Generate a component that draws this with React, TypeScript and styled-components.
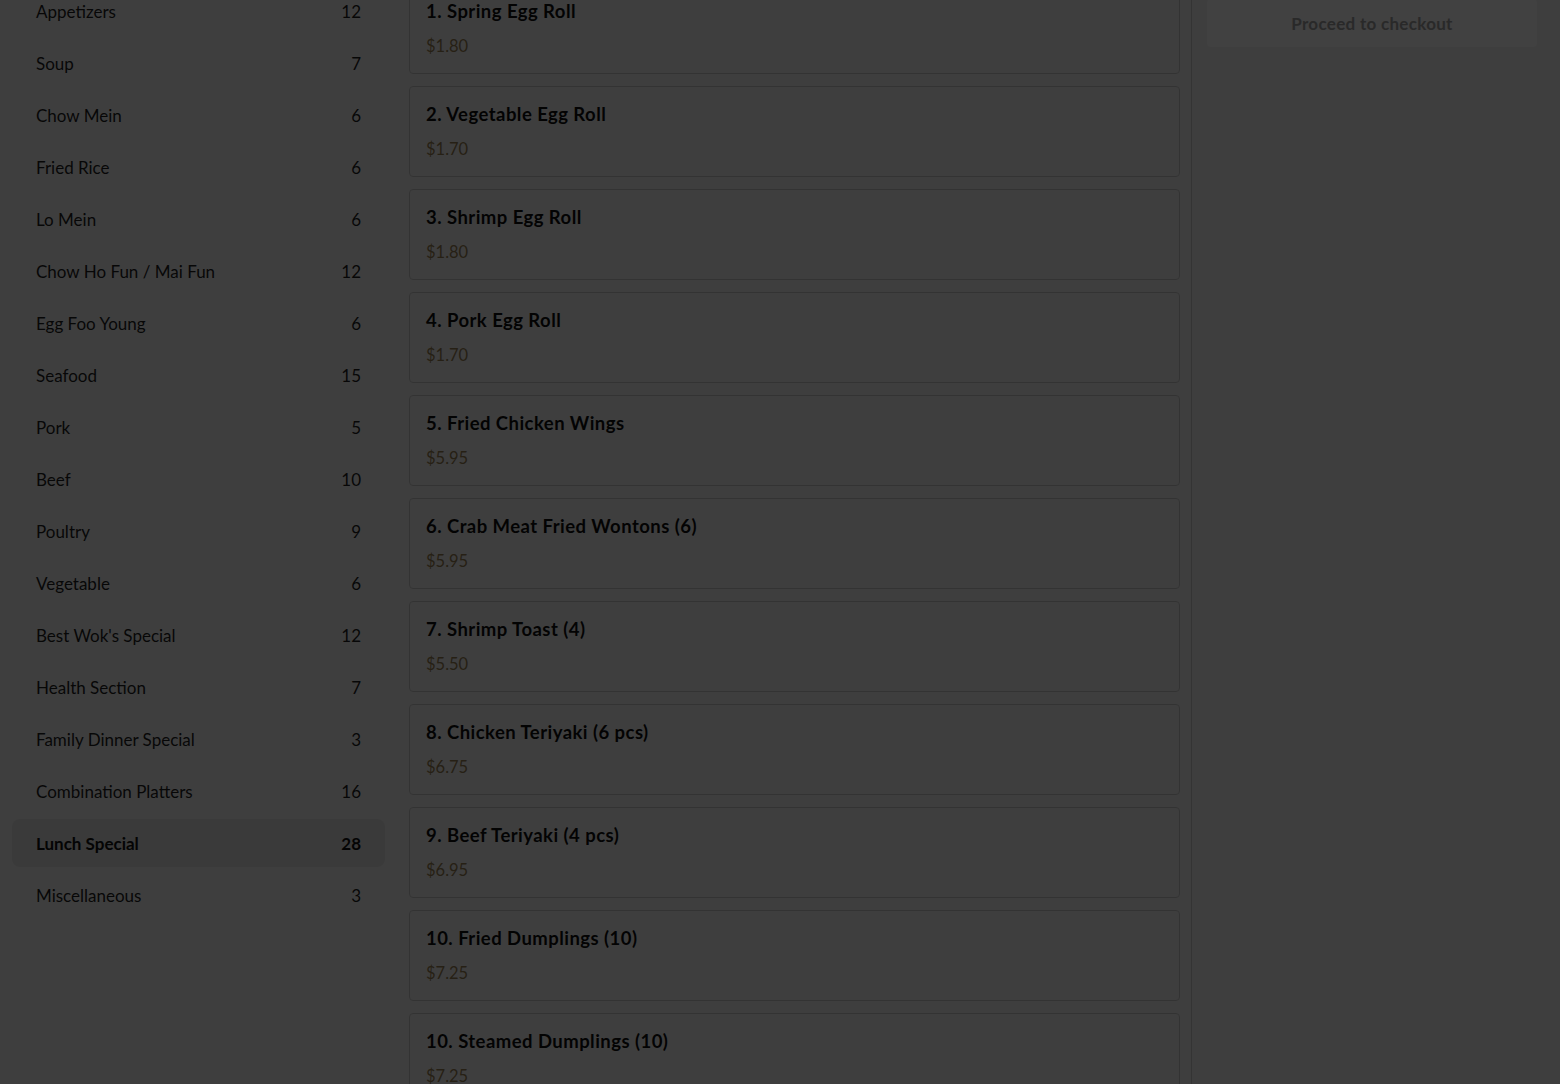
import React from 'react';
import styled, { createGlobalStyle } from 'styled-components';

const GlobalStyle = createGlobalStyle`
    html, body {
        margin: 0;
        padding: 0;
        height: 100%;
        overflow: hidden;
        background: #f0f0f0;
        font-family: 'Lato', 'Noto Sans', sans-serif;
        color: #333;
    }
    * { box-sizing: border-box; }
`;

// 3단 레이아웃
const Page = styled.div`
    display: grid;
    grid-template-columns: 397px 795px 1fr;
    height: 100vh;
    overflow: hidden;
`;

// 카테고리 목록
const Sidebar = styled.nav`
    display: flex;
    flex-direction: column;
    gap: 4px;
    padding: 0 12px;
    margin-top: -13px;
`;

const CategoryRow = styled.div<{ $active?: boolean }>`
    display: flex;
    align-items: center;
    justify-content: space-between;
    height: 48px;
    padding: 0 24px;
    border-radius: 8px;
    font-size: 17px;
    font-weight: ${p => (p.$active ? 700 : 400)};
    background: ${p => (p.$active ? '#dfdfdf' : 'transparent')};
    color: ${p => (p.$active ? '#111' : '#1e1e1e')};
`;

// 메뉴 목록
const MenuColumn = styled.main`
    display: flex;
    flex-direction: column;
    gap: 12px;
    padding: 0 11px 0 12px;
    margin-top: -17px;
    border-right: 1px solid #c9c9c9;
`;

const MenuCard = styled.div`
    border: 1px solid #c6c6c6;
    border-radius: 4px;
    padding: 16px 16px 16px;
    background: #f0f0f0;
    flex-shrink: 0;
`;

const ItemName = styled.div`
    font-size: 18.5px;
    font-weight: 700;
    line-height: 22px;
    letter-spacing: 0.45px;
    color: #0e0e0e;
`;

const ItemPrice = styled.div`
    margin-top: 13px;
    font-size: 16.5px;
    line-height: 22px;
    color: #957d52;
`;

// 장바구니
const CartPanel = styled.aside`
    padding: 0 23px 0 15px;
`;

const CheckoutButton = styled.button`
    width: 100%;
    height: 48px;
    margin-top: -1px;
    border: none;
    border-radius: 4px;
    background: #fafafa;
    color: #a0a0a0;
    font-family: inherit;
    font-size: 17px;
    font-weight: 700;
    letter-spacing: 0.3px;
`;

// 모달 배경
const Overlay = styled.div`
    position: fixed;
    inset: 0;
    background: rgba(0, 0, 0, 0.74);
`;

const categories: [string, number][] = [
    ['Appetizers', 12],
    ['Soup', 7],
    ['Chow Mein', 6],
    ['Fried Rice', 6],
    ['Lo Mein', 6],
    ['Chow Ho Fun / Mai Fun', 12],
    ['Egg Foo Young', 6],
    ['Seafood', 15],
    ['Pork', 5],
    ['Beef', 10],
    ['Poultry', 9],
    ['Vegetable', 6],
    ["Best Wok's Special", 12],
    ['Health Section', 7],
    ['Family Dinner Special', 3],
    ['Combination Platters', 16],
    ['Lunch Special', 28],
    ['Miscellaneous', 3],
];

const items: [string, string][] = [
    ['1. Spring Egg Roll', '$1.80'],
    ['2. Vegetable Egg Roll', '$1.70'],
    ['3. Shrimp Egg Roll', '$1.80'],
    ['4. Pork Egg Roll', '$1.70'],
    ['5. Fried Chicken Wings', '$5.95'],
    ['6. Crab Meat Fried Wontons (6)', '$5.95'],
    ['7. Shrimp Toast (4)', '$5.50'],
    ['8. Chicken Teriyaki (6 pcs)', '$6.75'],
    ['9. Beef Teriyaki (4 pcs)', '$6.95'],
    ['10. Fried Dumplings (10)', '$7.25'],
    ['10. Steamed Dumplings (10)', '$7.25'],
];

const App: React.FC = () => {
    return (
        <>
            <GlobalStyle />
            <Page>
                <Sidebar>
                    {categories.map(([name, count]) => (
                        <CategoryRow key={name} $active={name === 'Lunch Special'}>
                            <span>{name}</span>
                            <span>{count}</span>
                        </CategoryRow>
                    ))}
                </Sidebar>
                <MenuColumn>
                    {items.map(([name, price]) => (
                        <MenuCard key={name}>
                            <ItemName>{name}</ItemName>
                            <ItemPrice>{price}</ItemPrice>
                        </MenuCard>
                    ))}
                </MenuColumn>
                <CartPanel>
                    <CheckoutButton disabled>Proceed to checkout</CheckoutButton>
                </CartPanel>
            </Page>
            <Overlay />
        </>
    );
};

export default App;
